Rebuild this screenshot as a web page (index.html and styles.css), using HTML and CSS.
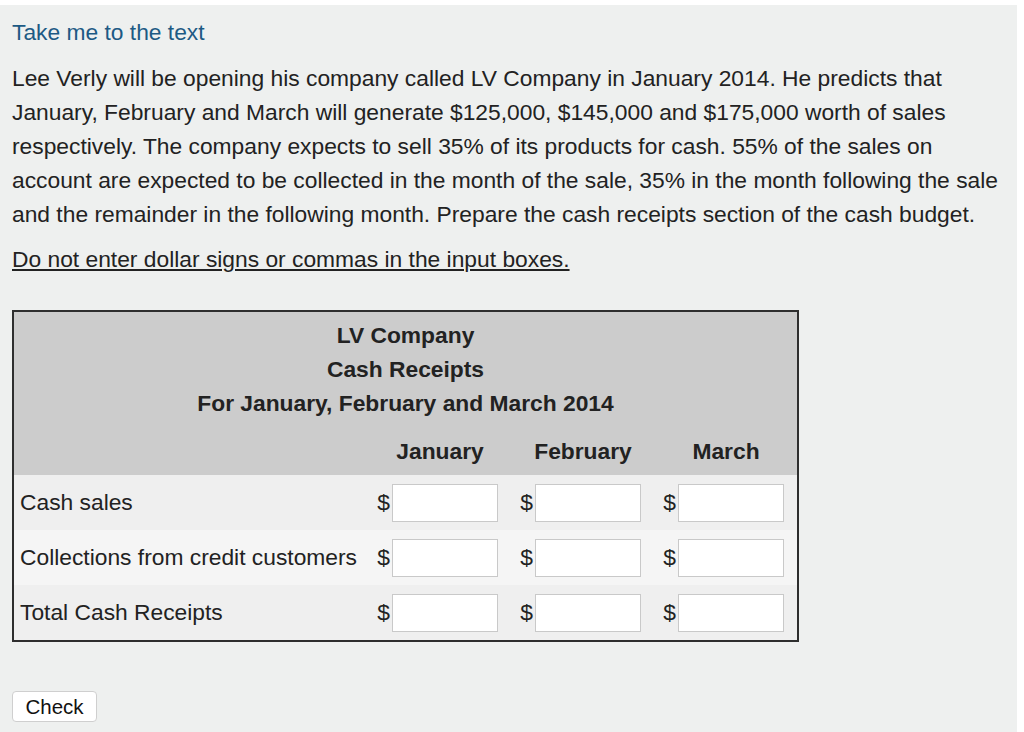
FILE: index.html
```html
<!DOCTYPE html>
<html>
<head>
<meta charset="utf-8">
<link rel="stylesheet" href="styles.css">
</head>
<body>
<div class="panel">
  <a class="link" href="#">Take me to the text</a>
  <p class="question">Lee Verly will be opening his company called LV Company in January 2014. He predicts that January, February and March will generate $125,000, $145,000 and $175,000 worth of sales respectively. The company expects to sell 35% of its products for cash. 55% of the sales on account are expected to be collected in the month of the sale, 35% in the month following the sale and the remainder in the following month. Prepare the cash receipts section of the cash budget.</p>
  <p class="note">Do not enter dollar signs or commas in the input boxes.</p>
  <div class="budget">
    <div class="head">
      <div class="title">LV Company<br>Cash Receipts<br>For January, February and March 2014</div>
      <div class="cols">
        <span></span>
        <span class="colname">January</span>
        <span class="colname">February</span>
        <span class="colname">March</span>
      </div>
    </div>
    <div class="row odd">
      <span class="label">Cash sales</span>
      <span class="cell">$<input type="text"></span>
      <span class="cell">$<input type="text"></span>
      <span class="cell">$<input type="text"></span>
    </div>
    <div class="row even">
      <span class="label">Collections from credit customers</span>
      <span class="cell">$<input type="text"></span>
      <span class="cell">$<input type="text"></span>
      <span class="cell">$<input type="text"></span>
    </div>
    <div class="row odd">
      <span class="label">Total Cash Receipts</span>
      <span class="cell">$<input type="text"></span>
      <span class="cell">$<input type="text"></span>
      <span class="cell">$<input type="text"></span>
    </div>
  </div>
  <button class="check">Check</button>
</div>
</body>
</html>
```

FILE: styles.css
```css
html, body {
  margin: 0;
  padding: 0;
  background: #ffffff;
}
body {
  font-family: "Liberation Sans", Arial, sans-serif;
  font-size: 22.8px;
  color: #222222;
}
.panel {
  box-sizing: border-box;
  margin-top: 5px;
  width: 1017px;
  height: 727px;
  background: #eef0ef;
  padding: 10px 12px;
}
.link {
  display: block;
  color: #1d5a84;
  text-decoration: none;
  line-height: 34px;
}
.question {
  margin: 12px 0 0 0;
  line-height: 34px;
}
.note {
  margin: 11px 0 0 0;
  line-height: 34px;
  text-decoration: underline;
}
.budget {
  margin-top: 34px;
  width: 787px;
  box-sizing: border-box;
  border: 2px solid #2e2e2e;
}
.head {
  background: #cccccc;
  padding: 6px 0 7px 0;
  font-weight: bold;
}
.title {
  text-align: center;
  line-height: 34px;
}
.cols, .row {
  display: grid;
  grid-template-columns: minmax(0, 1fr) repeat(3, 121px);
  column-gap: 22px;
  padding-right: 13px;
  align-items: center;
}
.cols {
  margin-top: 14px;
  line-height: 34px;
}
.colname {
  text-align: center;
  padding-left: 5px;
}
.row {
  height: 55px;
}
.odd { background: #efefef; }
.even { background: #f5f5f5; }
.label {
  padding-left: 6px;
  white-space: nowrap;
}
.cell {
  display: flex;
  align-items: center;
  justify-content: flex-end;
}
.cell input {
  box-sizing: border-box;
  width: 106px;
  height: 38px;
  margin: 0 0 0 2px;
  border: 1px solid #c9c9c9;
  background: #ffffff;
  padding: 0;
}
.check {
  margin-top: 49px;
  width: 85px;
  height: 31px;
  background: #ffffff;
  border: 1px solid #cfcfcf;
  border-radius: 4px;
  font-family: "Liberation Sans", Arial, sans-serif;
  font-size: 20.5px;
  color: #111111;
  padding: 0;
  display: block;
}
```
